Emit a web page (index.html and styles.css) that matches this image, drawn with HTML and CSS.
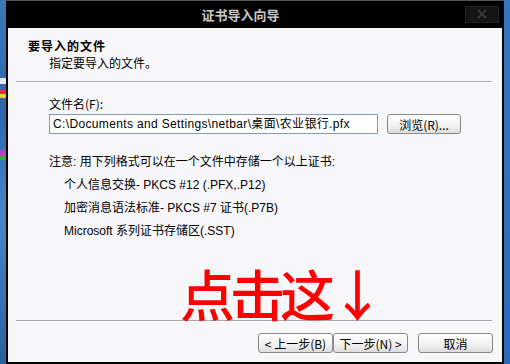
FILE: index.html
```html
<!DOCTYPE html>
<html lang="zh-CN">
<head>
<meta charset="utf-8">
<title>证书导入向导</title>
<link rel="stylesheet" href="styles.css">
</head>
<body>
<div class="screen">
  <div class="desk desk-left">
    <span class="dot d1"></span><span class="dot d2"></span><span class="dot d3"></span><span class="dot d4"></span><span class="dot d5"></span>
  </div>
  <div class="dialog">
    <div class="titlebar">
      <div class="title">证书导入向导</div>
      <div class="close"><svg width="12" height="10" viewBox="0 0 12 10"><path d="M2 1 L10 9 M10 1 L2 9" stroke="#3a3a3a" stroke-width="2"/></svg></div>
    </div>
    <div class="client">
      <div class="header">
        <div class="h-title">要导入的文件</div>
        <div class="h-sub">指定要导入的文件。</div>
      </div>
      <div class="sep"></div>
      <div class="body">
        <div class="label">文件名(F):</div>
        <div class="file-row">
          <div class="input">C:\Documents and Settings\netbar\桌面\农业银行.pfx</div>
          <div class="btn browse">浏览(R)...</div>
        </div>
        <div class="note">注意: 用下列格式可以在一个文件中存储一个以上证书:</div>
        <ul class="formats">
          <li>个人信息交换- PKCS #12 (.PFX,.P12)</li>
          <li>加密消息语法标准- PKCS #7 证书(.P7B)</li>
          <li>Microsoft 系列证书存储区(.SST)</li>
        </ul>
      </div>
      <div class="footer-area">
        <div class="callout">点击这↓</div>
        <div class="sep sep-bottom"></div>
        <div class="buttons">
          <div class="btn nav">&lt; 上一步(B)</div>
          <div class="btn nav">下一步(N) &gt;</div>
          <div class="btn cancel">取消</div>
        </div>
      </div>
    </div>
  </div>
  <div class="desk desk-right"></div>
</div>
</body>
</html>
```
FILE: styles.css
```css
html, body {
  margin: 0;
  padding: 0;
}
body {
  width: 510px;
  height: 364px;
  overflow: hidden;
  background: #2f6fb5;
  font-family: "Liberation Sans", "Noto Sans CJK SC", sans-serif;
  font-size: 12px;
  color: #000;
}
.screen {
  display: flex;
  width: 510px;
  height: 364px;
}
.desk {
  width: 6px;
  flex: none;
  background: linear-gradient(180deg, #3c78b8 0%, #2e66a8 30%, #4a86c4 60%, #2c5f9e 100%);
  display: flex;
  flex-direction: column;
}
.desk-right {
  background: linear-gradient(180deg, #3a76c0 0%, #2d6bb8 100%);
}
.dot {
  display: block;
  width: 6px;
  height: 4px;
}
.d1 { margin-top: 78px; background: #e0e8f0; height: 6px; }
.d2 { margin-top: 6px; background: #e23030; }
.d3 { background: #f0d020; }
.d4 { margin-top: 52px; background: #c040c0; height: 6px; }
.d5 { background: #30b030; }

.dialog {
  flex: 1;
  display: flex;
  flex-direction: column;
  background: #000;
  border-top: 1px solid #555;
  padding: 0 2px 2px 2px;
}
.titlebar {
  height: 27px;
  display: flex;
  align-items: center;
  flex: none;
}
.title {
  flex: 1;
  text-align: center;
  color: #c9c9c9;
  font-family: "Noto Sans CJK SC", sans-serif;
  font-weight: 700;
  font-size: 13px;
  padding-left: 8px;
}
.close {
  width: 32px;
  height: 15px;
  margin-right: 3px;
  margin-top: -1px;
  background: #151515;
  border: 1px solid #222;
  display: flex;
  align-items: center;
  justify-content: center;
}
.client {
  flex: 1;
  background: #f7f6f9;
  display: flex;
  flex-direction: column;
}
.header {
  padding: 10px 0 0 20px;
  height: 43px;
  box-sizing: border-box;
  font-family: "Noto Sans CJK SC", sans-serif;
}
.h-title {
  font-weight: 700;
  font-size: 12px;
  letter-spacing: 1px;
  line-height: 16px;
}
.h-sub {
  padding-left: 21px;
  line-height: 16px;
  margin-top: 1px;
}
.sep {
  height: 1px;
  background: #a7a6aa;
  border-bottom: 1px solid #fff;
  margin: 10px 10px 0 8px;
}
.body {
  padding: 13px 0 0 41px;
}
.label {
  font-family: "Noto Sans CJK SC", sans-serif;
  line-height: 16px;
}
.file-row {
  display: flex;
  align-items: center;
  margin-top: 2px;
}
.input {
  width: 329px;
  height: 20px;
  box-sizing: border-box;
  border: 1px solid #7f9db9;
  background: #fff;
  padding-left: 3px;
  line-height: 18px;
  font-size: 12px;
  letter-spacing: 0.35px;
  white-space: nowrap;
  overflow: hidden;
}
.btn {
  height: 20px;
  box-sizing: border-box;
  border: 1px solid #8a8a8a;
  border-radius: 3px;
  background: linear-gradient(180deg, #ffffff 0%, #f1f1f1 60%, #dcdcdc 100%);
  display: flex;
  align-items: center;
  justify-content: center;
  font-size: 12px;
  font-family: "Noto Sans CJK SC", sans-serif;
  white-space: nowrap;
}
.browse {
  width: 74px;
  margin-left: 9px;
}
.note {
  margin-top: 20px;
  line-height: 16px;
}
.formats {
  list-style: none;
  margin: 0;
  padding: 0 0 0 15px;
}
.formats li {
  margin-top: 7px;
  line-height: 16px;
}
.footer-area {
  flex: 1;
  display: flex;
  flex-direction: column;
  justify-content: flex-end;
  position: relative;
}
.callout {
  position: absolute;
  left: 172px;
  top: 21px;
  color: #ff0000;
  font-family: "Noto Sans CJK SC", sans-serif;
  font-weight: 500;
  font-size: 55px;
  line-height: 64px;
  letter-spacing: -5px;
}
.sep-bottom {
  margin: 0 10px 0 8px;
}
.buttons {
  display: flex;
  justify-content: flex-end;
  padding: 11px 9px 9px 0;
}
.nav {
  width: 75px;
}
.cancel {
  width: 75px;
  margin-left: 10px;
}
```
